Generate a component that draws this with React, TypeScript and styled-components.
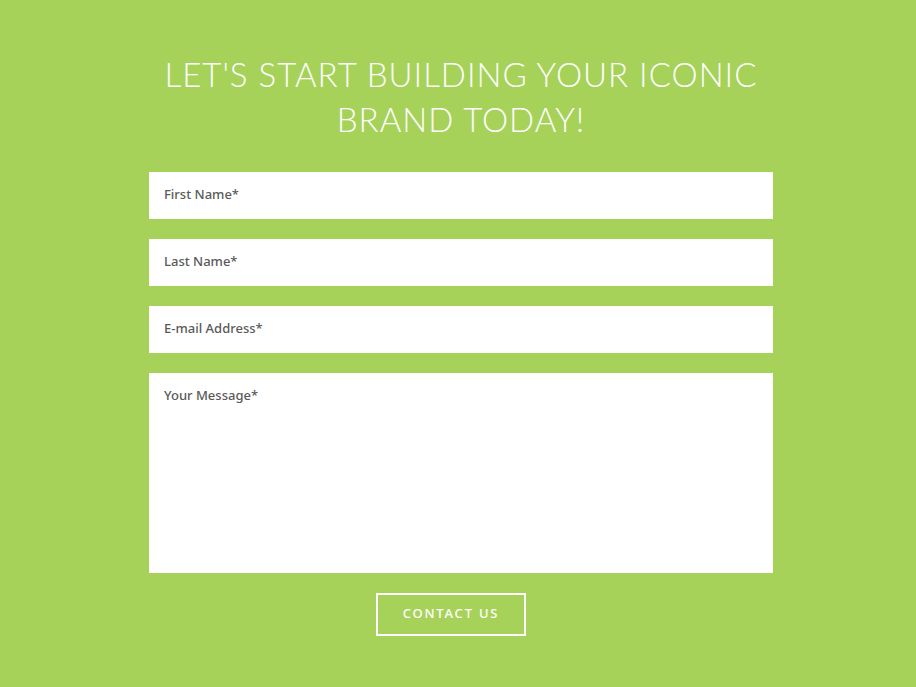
import React from 'react'
import styled, { createGlobalStyle } from 'styled-components'

const GlobalStyle = createGlobalStyle`
  html, body {
    margin: 0;
    padding: 0;
    background: #a6d25a;
  }
  * {
    box-sizing: border-box;
  }
`

const Section = styled.section`
  min-height: 687px;
  background: #a6d25a;
  padding: 52px 0 0 6px;
  display: flex;
  flex-direction: column;
  align-items: center;
`

const Heading = styled.h2`
  margin: 0 0 30px;
  width: 624px;
  text-align: center;
  color: #ffffff;
  font-family: 'Lato', 'Noto Sans', sans-serif;
  font-weight: 300;
  font-size: 33px;
  line-height: 45px;
  letter-spacing: 1px;
  text-transform: uppercase;
`

const Form = styled.form`
  width: 624px;
  display: flex;
  flex-direction: column;
  gap: 20px;
`

const Field = styled.input`
  display: block;
  width: 100%;
  height: 47px;
  border: none;
  outline: none;
  background: #ffffff;
  padding: 0 15px 4px;
  font-family: 'Noto Sans', 'Open Sans', sans-serif;
  font-size: 13px;
  font-weight: 500;
  color: #5a5a5a;

  &::placeholder {
    color: #5a5a5a;
    opacity: 1;
  }
`

const MessageField = styled.textarea`
  display: block;
  width: 100%;
  height: 200px;
  border: none;
  outline: none;
  resize: none;
  background: #ffffff;
  padding: 13px 15px;
  font-family: 'Noto Sans', 'Open Sans', sans-serif;
  font-size: 13px;
  font-weight: 500;
  line-height: 18px;
  color: #5a5a5a;

  &::placeholder {
    color: #5a5a5a;
    opacity: 1;
  }
`

const Actions = styled.div`
  display: flex;
  justify-content: center;
  padding-right: 20px;
`

const SubmitButton = styled.button`
  width: 150px;
  height: 43px;
  padding: 0 0 3px;
  background: transparent;
  border: 2px solid #ffffff;
  color: #ffffff;
  font-family: 'Noto Sans', 'Open Sans', sans-serif;
  font-size: 13px;
  font-weight: 500;
  letter-spacing: 1.8px;
  text-transform: uppercase;
  cursor: pointer;
`

export default function App() {
  return (
    <>
      <GlobalStyle />
      <Section>
        <Heading>
          Let's start building your iconic
          <br />
          brand today!
        </Heading>
        <Form onSubmit={(e) => e.preventDefault()}>
          <Field type="text" placeholder="First Name*" />
          <Field type="text" placeholder="Last Name*" />
          <Field type="email" placeholder="E-mail Address*" />
          <MessageField placeholder="Your Message*" />
          <Actions>
            <SubmitButton type="submit">Contact Us</SubmitButton>
          </Actions>
        </Form>
      </Section>
    </>
  )
}
